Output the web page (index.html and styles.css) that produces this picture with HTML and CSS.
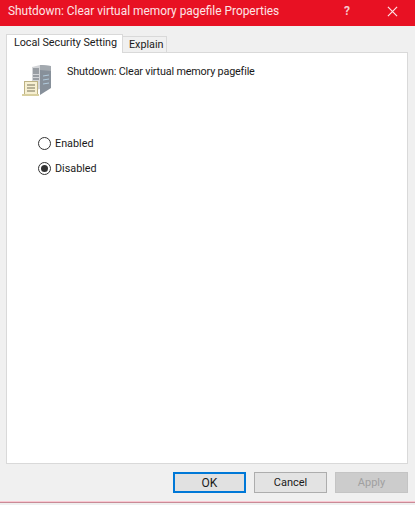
FILE: index.html
```html
<!DOCTYPE html>
<html lang="en">
  <head>
    <meta charset="UTF-8" />
    <title>Shutdown: Clear virtual memory pagefile Properties</title>
    <link rel="stylesheet" href="styles.css">
  </head>
  <body>
    <div class="dialog">
      <header class="titlebar">
        <span class="title">Shutdown: Clear virtual memory pagefile Properties</span>
        <span class="help">?</span>
        <svg class="close" width="11" height="11" viewBox="0 0 12 12">
          <path d="M1 1L11 11M11 1L1 11" stroke="#fde4e6" stroke-width="1.3" fill="none" />
        </svg>
      </header>

      <div class="body">
        <div class="tabs">
          <div class="tab active">Local Security Setting</div>
          <div class="tab">Explain</div>
        </div>

        <div class="panel">
          <div class="policy">
            <svg class="policy-icon" width="34" height="34" viewBox="0 0 34 34">
              <path d="M11 3L19 1V25L11 27Z" fill="#d3d5d8" />
              <path d="M19 1L30 2V24L19 31Z" fill="#87909a" />
              <path d="M19 1L30 2V7L19 6Z" fill="#a3a9af" />
              <path d="M12 5H18M12 7H18M12 9H18M12 12H18M12 15H18" stroke="#5f666e" stroke-width="1" />
              <path d="M22 12L28 11M22 16L28 15M22 20L28 19" stroke="#b2cbdd" stroke-width="1" />
              <rect x="3.5" y="17.5" width="13" height="13" fill="#f7f0d2" stroke="#bdb284" stroke-width="1" />
              <path d="M6 21H14M6 24H14M6 27H14" stroke="#77735a" stroke-width="1" />
              <rect x="1" y="30" width="17" height="2" fill="#d8cf9f" />
            </svg>
            <p class="policy-name">Shutdown: Clear virtual memory pagefile</p>
          </div>

          <div class="options">
            <label class="option"><span class="radio"></span>Enabled</label>
            <label class="option"><span class="radio checked"></span>Disabled</label>
          </div>
        </div>

        <div class="buttons">
          <button class="btn default">OK</button>
          <button class="btn">Cancel</button>
          <button class="btn disabled">Apply</button>
        </div>
      </div>

      <div class="edge"></div>
    </div>
  </body>
</html>
```

FILE: styles.css
```css
* {
  margin: 0;
  padding: 0;
  box-sizing: border-box;
}

html,
body {
  width: 415px;
  height: 505px;
  overflow: hidden;
}

body {
  font-family: Roboto, "Liberation Sans", sans-serif;
  font-size: 10.8px;
  color: #1a1a1a;
  background: #f0f0f0;
}

.dialog {
  display: flex;
  flex-direction: column;
  height: 505px;
}

.titlebar {
  display: flex;
  align-items: center;
  flex: 0 0 26px;
  padding: 0 0 4px 8px;
  background: #e81123;
}

.title {
  flex: 1;
  font-size: 11.9px;
  color: #fde4e6;
}

.help {
  margin-right: 37px;
  font-size: 12px;
  font-weight: bold;
  color: #f6c9cd;
}

.close {
  margin-right: 17px;
}

.body {
  flex: 1;
  display: flex;
  flex-direction: column;
  padding: 9px 7px 0 6px;
}

.tabs {
  display: flex;
  align-items: flex-end;
  height: 18px;
  position: relative;
  z-index: 1;
  margin-bottom: -1px;
}

.tab {
  height: 17px;
  padding: 0 2px 0 6px;
  line-height: 15px;
  background: #f0f0f0;
  border: 1px solid #d9d9d9;
  border-left: 0;
}

.tab.active {
  height: 19px;
  padding: 0 5px 0 7px;
  line-height: 16px;
  background: #fff;
  border-left: 1px solid #d9d9d9;
  border-bottom: 0;
  letter-spacing: -0.05px;
}

.panel {
  flex: 0 0 412px;
  padding: 11px 14px;
  background: #fff;
  border: 1px solid #d9d9d9;
}

.policy {
  display: flex;
  align-items: flex-start;
  gap: 12px;
}

.policy-icon {
  flex-shrink: 0;
}

.policy-name {
  margin-top: 1px;
  letter-spacing: -0.17px;
}

.options {
  display: flex;
  flex-direction: column;
  gap: 11px;
  margin: 38px 0 0 17px;
}

.option {
  display: flex;
  align-items: center;
  gap: 4px;
  height: 14px;
}

.radio {
  display: flex;
  align-items: center;
  justify-content: center;
  width: 13px;
  height: 13px;
  background: #fff;
  border: 1px solid #333;
  border-radius: 50%;
}

.radio.checked::after {
  content: "";
  width: 7px;
  height: 7px;
  background: #333;
  border-radius: 50%;
}

.buttons {
  display: flex;
  justify-content: flex-end;
  gap: 8px;
  margin-top: 8px;
}

.btn {
  width: 73px;
  height: 21px;
  font-family: inherit;
  font-size: 11px;
  color: #1a1a1a;
  background: #e3e3e3;
  border: 1px solid #adadad;
}

.btn.default {
  font-size: 12px;
  background: #e1e1e1;
  border: 2px solid #0078d7;
}

.btn.disabled {
  color: #a0a0a0;
  background: #cccccc;
  border-color: #c4c4c4;
}

.edge {
  flex: 0 0 2px;
  margin-bottom: 2px;
  background: #f9c9d3;
  border-bottom: 1px solid #c98a96;
}
```
